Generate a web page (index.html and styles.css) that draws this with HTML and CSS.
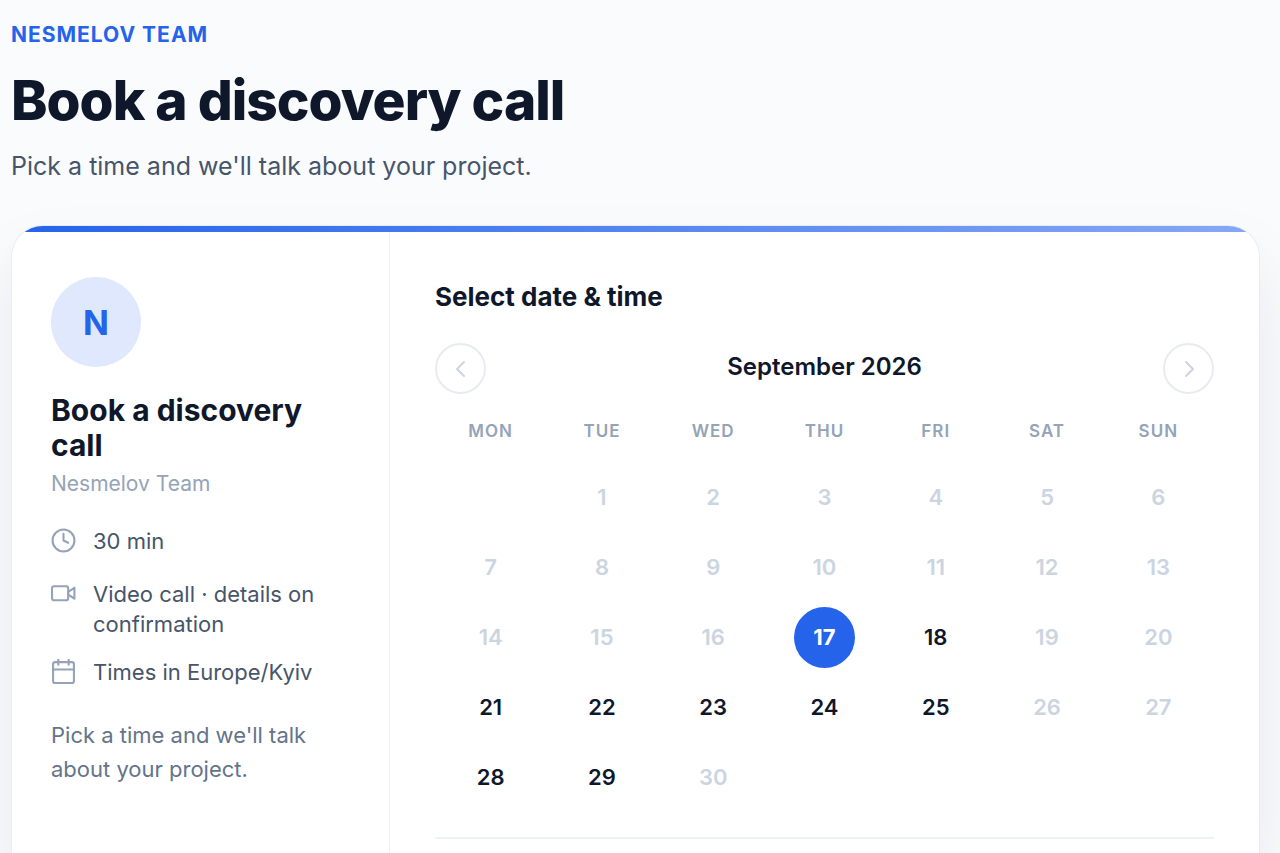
FILE: index.html
```html
<!DOCTYPE html>
<html lang="en">
<head>
    <meta charset="UTF-8">
    <meta name="viewport" content="width=device-width, initial-scale=1.0">
    <title>Book a discovery call</title>
    <link rel="stylesheet" href="styles.css">
</head>
<body>
    <header class="page-header">
        <p class="eyebrow">NESMELOV TEAM</p>
        <h1>Book a discovery call</h1>
        <p class="lead">Pick a time and we'll talk about your project.</p>
    </header>

    <main class="card">
        <div class="accent"></div>
        <div class="card-body">
            <aside class="info">
                <div class="avatar">N</div>
                <h2 class="info-title">Book a discovery call</h2>
                <p class="host">Nesmelov Team</p>
                <ul class="details">
                    <li>
                        <svg class="icon" viewBox="0 0 24 24"><circle cx="12" cy="12" r="10.5"/><path d="M12 5.5V12l4.5 2.2"/></svg>
                        <span>30 min</span>
                    </li>
                    <li>
                        <svg class="icon" viewBox="0 0 24 24"><rect x="1" y="5" width="15.5" height="13.5" rx="2"/><path d="M16.5 10.5l6-4v10.5l-6-4z"/></svg>
                        <span>Video call · details on confirmation</span>
                    </li>
                    <li>
                        <svg class="icon" viewBox="0 0 24 24"><rect x="2" y="3" width="20" height="20" rx="2"/><path d="M7 0.5v5M17 0.5v5M2 10h20"/></svg>
                        <span>Times in Europe/Kyiv</span>
                    </li>
                </ul>
                <p class="note">Pick a time and we'll talk about your project.</p>
            </aside>

            <section class="picker">
                <h2 class="picker-title">Select date &amp; time</h2>
                <div class="month-nav">
                    <button class="nav-button" aria-label="Previous month" disabled>
                        <svg viewBox="0 0 24 24"><path d="M15 5l-7 7 7 7"/></svg>
                    </button>
                    <div class="month">September 2026</div>
                    <button class="nav-button" aria-label="Next month" disabled>
                        <svg viewBox="0 0 24 24"><path d="M9 5l7 7-7 7"/></svg>
                    </button>
                </div>
                <table class="calendar">
                    <thead>
                        <tr><th>MON</th><th>TUE</th><th>WED</th><th>THU</th><th>FRI</th><th>SAT</th><th>SUN</th></tr>
                    </thead>
                    <tbody>
                        <tr>
                            <td></td>
                            <td><button class="day" disabled>1</button></td>
                            <td><button class="day" disabled>2</button></td>
                            <td><button class="day" disabled>3</button></td>
                            <td><button class="day" disabled>4</button></td>
                            <td><button class="day" disabled>5</button></td>
                            <td><button class="day" disabled>6</button></td>
                        </tr>
                        <tr>
                            <td><button class="day" disabled>7</button></td>
                            <td><button class="day" disabled>8</button></td>
                            <td><button class="day" disabled>9</button></td>
                            <td><button class="day" disabled>10</button></td>
                            <td><button class="day" disabled>11</button></td>
                            <td><button class="day" disabled>12</button></td>
                            <td><button class="day" disabled>13</button></td>
                        </tr>
                        <tr>
                            <td><button class="day" disabled>14</button></td>
                            <td><button class="day" disabled>15</button></td>
                            <td><button class="day" disabled>16</button></td>
                            <td><button class="day selected">17</button></td>
                            <td><button class="day">18</button></td>
                            <td><button class="day" disabled>19</button></td>
                            <td><button class="day" disabled>20</button></td>
                        </tr>
                        <tr>
                            <td><button class="day">21</button></td>
                            <td><button class="day">22</button></td>
                            <td><button class="day">23</button></td>
                            <td><button class="day">24</button></td>
                            <td><button class="day">25</button></td>
                            <td><button class="day" disabled>26</button></td>
                            <td><button class="day" disabled>27</button></td>
                        </tr>
                        <tr>
                            <td><button class="day">28</button></td>
                            <td><button class="day">29</button></td>
                            <td><button class="day" disabled>30</button></td>
                            <td></td>
                            <td></td>
                            <td></td>
                            <td></td>
                        </tr>
                    </tbody>
                </table>
                <hr class="divider">
            </section>
        </div>
    </main>
</body>
</html>
```
FILE: styles.css
```css
* {
    box-sizing: border-box;
}

body {
    display: flex;
    flex-direction: column;
    min-height: 100vh;
    margin: 0;
    padding: 20px 20px 0 11px;
    background: #fafbfd;
    color: #0f172a;
    font-family: Inter, sans-serif;
    font-size: 22px;
}

h1, h2, p, ul {
    margin: 0;
    padding: 0;
}

button {
    font-family: inherit;
    cursor: pointer;
}

button:disabled {
    cursor: default;
}

.page-header {
    padding-bottom: 40px;
}

.eyebrow {
    color: #2563eb;
    font-size: 21px;
    font-weight: 700;
    line-height: 30px;
    letter-spacing: 1px;
}

h1 {
    margin-top: 18px;
    font-size: 55px;
    font-weight: 800;
    line-height: 64px;
    letter-spacing: -1px;
}

.lead {
    margin-top: 15px;
    color: #475569;
    font-size: 25px;
    line-height: 38px;
}

.card {
    display: flex;
    flex: 1;
    flex-direction: column;
    overflow: hidden;
    background: #fff;
    border: 1px solid #e9edf3;
    border-bottom: 0;
    border-radius: 32px 32px 0 0;
    box-shadow: 0 32px 64px rgba(15, 23, 42, 0.08);
}

.accent {
    height: 6px;
    background: linear-gradient(90deg, #2563eb, #86a8f5);
}

.card-body {
    display: grid;
    flex: 1;
    grid-template-columns: 378px 1fr;
}

.info {
    padding: 45px 44px 45px 39px;
    border-right: 1px solid #eef1f5;
}

.avatar {
    display: flex;
    align-items: center;
    justify-content: center;
    width: 90px;
    height: 90px;
    border-radius: 50%;
    background: #e0e8fd;
    color: #2563eb;
    font-size: 34px;
    font-weight: 700;
}

.info-title {
    margin-top: 26px;
    font-size: 30px;
    font-weight: 700;
    line-height: 35px;
}

.host {
    margin-top: 5px;
    color: #94a3b8;
    font-size: 21px;
    line-height: 32px;
}

.details {
    display: flex;
    flex-direction: column;
    gap: 18px;
    margin-top: 26px;
    color: #475569;
    line-height: 30px;
    list-style: none;
}

.details li {
    display: flex;
    gap: 17px;
    min-height: 35px;
}

.icon {
    flex: none;
    width: 25px;
    height: 25px;
    margin-top: 2px;
    fill: none;
    stroke: #94a3b8;
    stroke-width: 2;
    stroke-linecap: round;
    stroke-linejoin: round;
}

.note {
    margin-top: 26px;
    color: #64748b;
    line-height: 34px;
}

.picker {
    padding: 46px 45px 0;
}

.picker-title {
    font-size: 26px;
    font-weight: 700;
    line-height: 38px;
}

.month-nav {
    display: flex;
    align-items: flex-start;
    justify-content: space-between;
    margin-top: 27px;
}

.month {
    font-size: 24px;
    font-weight: 600;
    line-height: 47px;
}

.nav-button {
    display: flex;
    align-items: center;
    justify-content: center;
    width: 51px;
    height: 51px;
    padding: 0;
    background: #fff;
    border: 2px solid #e8ebf0;
    border-radius: 50%;
}

.nav-button svg {
    width: 24px;
    height: 24px;
    fill: none;
    stroke: #cbd5e1;
    stroke-width: 2;
    stroke-linecap: round;
    stroke-linejoin: round;
}

.calendar {
    width: 100%;
    margin-top: 22px;
    border-collapse: collapse;
    table-layout: fixed;
}

.calendar th {
    padding: 0 0 16px;
    color: #94a3b8;
    font-size: 17px;
    font-weight: 600;
    line-height: 30px;
    letter-spacing: 1px;
}

.calendar td {
    height: 70px;
    padding: 0;
    text-align: center;
}

.day {
    width: 61px;
    height: 61px;
    padding: 0;
    background: none;
    border: 0;
    border-radius: 50%;
    color: #0f172a;
    font-size: 22px;
    font-weight: 600;
    vertical-align: middle;
}

.day:disabled {
    color: #cbd5e1;
}

.day.selected {
    background: #2563eb;
    color: #fff;
    font-weight: 700;
}

.divider {
    height: 2px;
    margin: 25px 0 0;
    background: #eef1f5;
    border: 0;
}
```
